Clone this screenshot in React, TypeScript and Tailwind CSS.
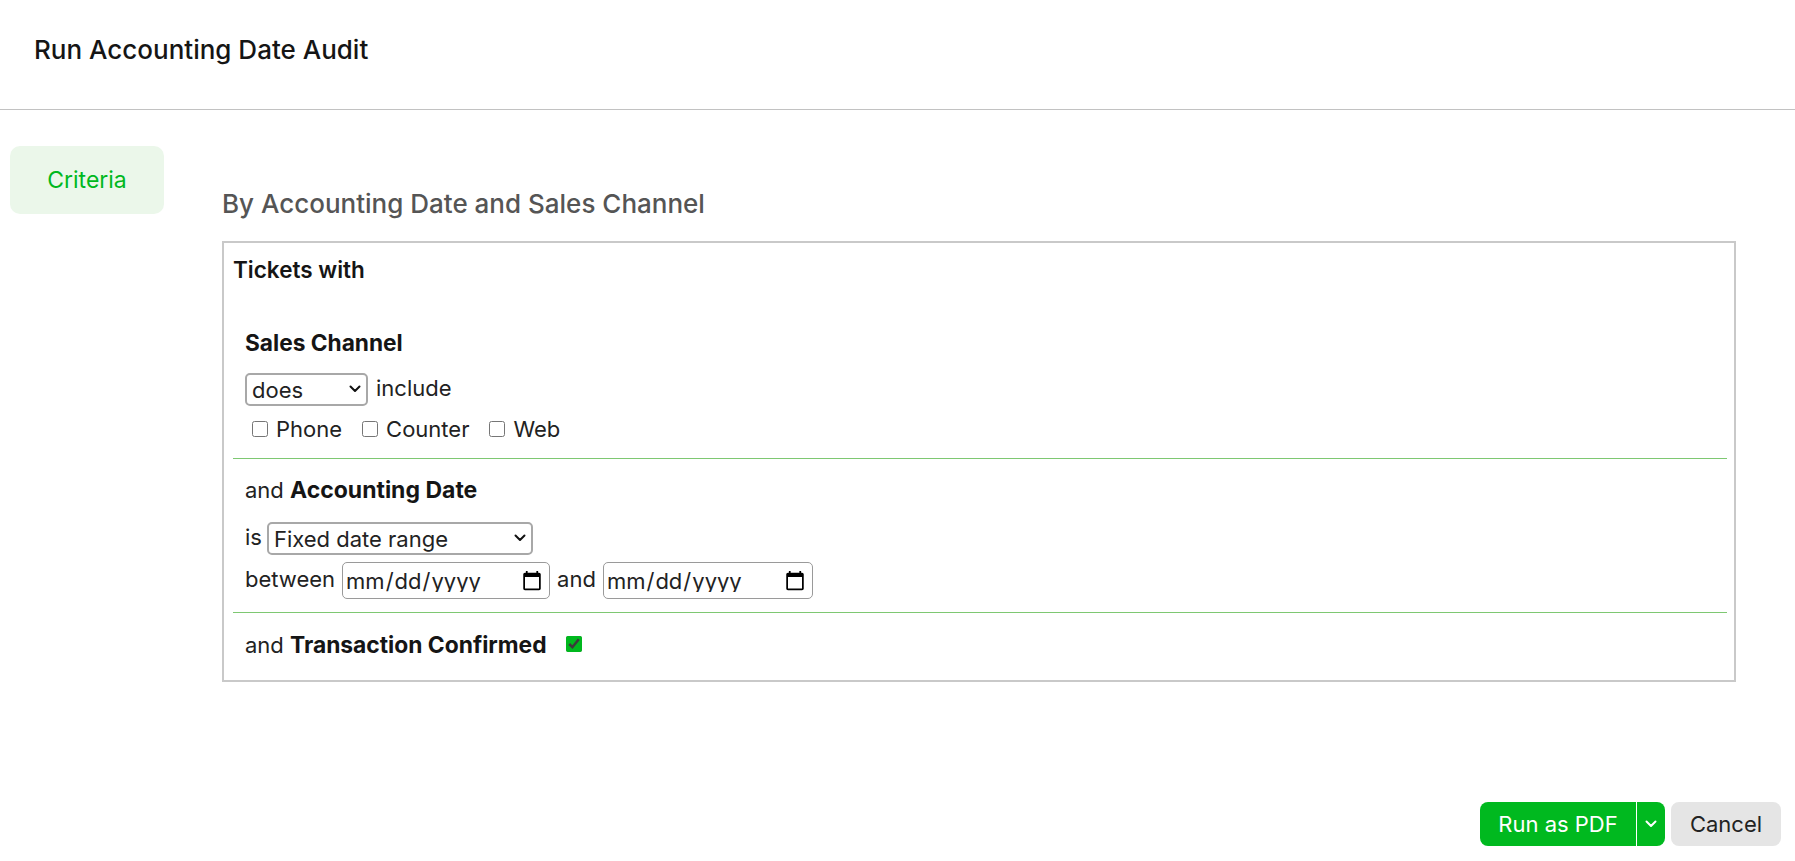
import { useState } from "react";

const channels = ["Phone", "Counter", "Web"];

function Chevron({ className }: { className?: string }) {
  return (
    <svg viewBox="0 0 12 8" className={className} fill="none" stroke="currentColor" strokeWidth="2" strokeLinecap="round" strokeLinejoin="round">
      <path d="M1.5 1.5l4.5 4.5 4.5-4.5" />
    </svg>
  );
}

function SelectBox({ value, options, width }: { value: string; options: string[]; width: string }) {
  const [current, setCurrent] = useState(value);
  return (
    <div className={`relative h-[33px] ${width}`}>
      <select
        value={current}
        onChange={(event) => setCurrent(event.target.value)}
        className="h-full w-full appearance-none rounded-[5px] border-2 border-[#a8a8a8] bg-white pl-[5px] pr-7 pt-[2px] text-[22px] leading-[27px] text-[#222]"
      >
        {options.map((item) => (
          <option key={item} value={item}>
            {item}
          </option>
        ))}
      </select>
      <Chevron className="pointer-events-none absolute right-[7px] top-[12px] h-[8px] w-[12px] text-[#111]" />
    </div>
  );
}

function DateBox({ width }: { width: string }) {
  return (
    <input
      type="date"
      className={`h-[37px] ${width} rounded-[5px] border border-[#9a9a9a] bg-white pl-[2px] pr-[4px] text-[22px] leading-none text-[#222]`}
    />
  );
}

export default function App() {
  const [picked, setPicked] = useState<string[]>([]);
  const [confirmed, setConfirmed] = useState(true);

  return (
    <div className="flex h-screen flex-col bg-white font-['Inter',sans-serif] text-[#222]">
      <header className="h-[110px] border-b border-[#c2c2c2] pl-[34px] pt-[34px]">
        <h1 className="text-[26px] font-medium leading-[32px] text-[#151515]">Run Accounting Date Audit</h1>
      </header>

      <div className="flex pt-[36px]">
        <aside className="w-[222px] shrink-0 pl-[10px]">
          <button
            type="button"
            className="flex h-[68px] w-[154px] items-center justify-center rounded-[10px] bg-[#ebf7ea] text-[23px] leading-none text-[#00b81e]"
          >
            Criteria
          </button>
        </aside>

        <main className="flex-1 pr-[59px] pt-[42px]">
          <h2 className="text-[26px] font-medium leading-[32px] text-[#555]">By Accounting Date and Sales Channel</h2>

          <div className="mt-[21px] border-2 border-[#c9c9c9] pb-[21px] pl-[9px] pr-[7px] pt-[13px]">
            <p className="text-[22.5px] font-semibold leading-[28px] text-[#151515]">Tickets with</p>

            <section className="mt-[45px] border-b border-[#7ec872] pb-[15px] pl-[12px]">
              <h3 className="text-[22.7px] font-bold leading-[28px] text-[#151515]">Sales Channel</h3>
              <div className="mt-[16px] flex items-center gap-[8px]">
                <SelectBox value="does" options={["does", "does not"]} width="w-[123px]" />
                <span className="-mt-[3px] text-[22px] leading-[28px]">include</span>
              </div>
              <div className="mt-[9px] flex h-[28px] items-center pl-[7px] text-[22px] leading-[28px]">
                {channels.map((name) => (
                  <label key={name} className="mr-[20px] flex items-center gap-[8px]">
                    <input
                      type="checkbox"
                      checked={picked.includes(name)}
                      onChange={() =>
                        setPicked((prev) => (prev.includes(name) ? prev.filter((item) => item !== name) : [...prev, name]))
                      }
                      className="h-4 w-4"
                    />
                    {name}
                  </label>
                ))}
              </div>
            </section>

            <section className="border-b border-[#7ec872] pb-[13px] pl-[12px] pt-[17px]">
              <p className="text-[22px] leading-[28px]">
                and <span className="text-[23px] font-bold text-[#151515]">Accounting Date</span>
              </p>
              <div className="mt-[18px] flex items-center gap-[5px]">
                <span className="-mt-[3px] text-[22px] leading-[28px]">is</span>
                <SelectBox
                  value="Fixed date range"
                  options={["Fixed date range", "Relative date range"]}
                  width="w-[266px]"
                />
              </div>
              <div className="mt-[7px] flex items-center gap-[7px] text-[22px] leading-[28px]">
                <span className="-mt-[3px]">between</span>
                <DateBox width="w-[208px]" />
                <span className="-mt-[3px]">and</span>
                <DateBox width="w-[210px]" />
              </div>
            </section>

            <section className="flex items-center pl-[12px] pt-[18px]">
              <p className="text-[22px] leading-[28px]">
                and <span className="text-[22.8px] font-bold text-[#151515]">Transaction Confirmed</span>
              </p>
              <input
                type="checkbox"
                checked={confirmed}
                onChange={() => setConfirmed((prev) => !prev)}
                className="-mt-[3px] ml-[19px] h-4 w-4 accent-[#00b81e]"
              />
            </section>
          </div>
        </main>
      </div>

      <footer className="mt-auto flex justify-end gap-[6px] pb-[15px] pr-[14px]">
        <div className="flex h-[44px]">
          <button type="button" className="w-[156px] rounded-l-[8px] bg-[#00b91f] text-[22px] text-white">
            Run as PDF
          </button>
          <button
            type="button"
            aria-label="More run options"
            className="flex w-[29px] items-center justify-center rounded-r-[8px] border-l border-white bg-[#00b91f] text-white"
          >
            <Chevron className="h-[8px] w-[12px]" />
          </button>
        </div>
        <button type="button" className="h-[44px] w-[110px] rounded-[8px] bg-[#e5e5e5] text-[22px] text-[#222]">
          Cancel
        </button>
      </footer>
    </div>
  );
}
